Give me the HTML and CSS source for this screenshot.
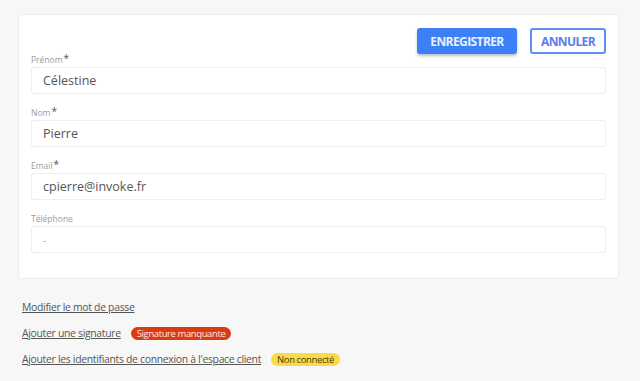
FILE: index.html
```html
<!DOCTYPE html>
<html lang="fr">
<head>
    <meta charset="UTF-8">
    <title>Profil utilisateur</title>
    <link rel="stylesheet" href="styles.css">
</head>
<body>
    <div class="profile-card">
        <div class="card-actions">
            <button class="btn btn-primary" type="button">ENREGISTRER</button>
            <button class="btn btn-outline" type="button">ANNULER</button>
        </div>

        <div class="field">
            <label class="field-label">Prénom<span class="req">*</span></label>
            <div class="field-input">Célestine</div>
        </div>
        <div class="field">
            <label class="field-label">Nom<span class="req">*</span></label>
            <div class="field-input">Pierre</div>
        </div>
        <div class="field">
            <label class="field-label">Email<span class="req">*</span></label>
            <div class="field-input">cpierre@invoke.fr</div>
        </div>
        <div class="field">
            <label class="field-label">Téléphone</label>
            <div class="field-input empty">-</div>
        </div>
    </div>

    <ul class="links">
        <li><a href="#">Modifier le mot de passe</a></li>
        <li><a href="#">Ajouter une signature</a><span class="badge badge-red">Signature manquante</span></li>
        <li><a href="#">Ajouter les identifiants de connexion à l'espace client</a><span class="badge badge-yellow">Non connecté</span></li>
    </ul>
</body>
</html>
```

FILE: styles.css
```css
body{
    margin: 0;
    padding: 14px 21px 0 18px;
    background-color: #f7f7f7;
    font-family: "Open Sans", "Liberation Sans", sans-serif;
    color: #444;
}

.profile-card{
    background-color: #fff;
    border: 1px solid #ececec;
    border-radius: 3px;
    padding: 13px 12px 25px;
}

.card-actions{
    display: flex;
    justify-content: flex-end;
    gap: 13px;
}

.btn{
    height: 26px;
    padding: 0;
    border-radius: 3px;
    font-family: "Open Sans", "Liberation Sans", sans-serif;
    font-size: 12px;
    font-weight: 700;
    letter-spacing: -0.6px;
    cursor: pointer;
}
.btn-primary{
    width: 100px;
    border: 0;
    color: #e9f0ff;
    background-color: #3b80f6;
    box-shadow: 0 2px 3px rgba(0, 0, 0, 0.25);
}
.btn-outline{
    width: 76px;
    border: 2px solid #5d8ff5;
    color: #5a7cee;
    background-color: #fff;
}

.field{ margin-top: 13px; }
.field:nth-child(2){ margin-top: 0; }

.field-label{
    display: block;
    height: 13px;
    font-size: 8.5px;
    line-height: 11px;
    color: #9c9c9c;
}
.field-label .req{
    color: #555;
    font-size: 10px;
    vertical-align: top;
    line-height: 8px;
    margin-left: 1px;
}

.field-input{
    height: 25px;
    line-height: 25px;
    border: 1px solid #efefef;
    border-radius: 2px;
    padding: 0 11px;
    font-size: 12.5px;
    color: #555;
}
.field-input.empty{ color: #aaa; font-size: 11px; }

.links{
    margin: 15px 0 0;
    padding: 0 0 0 4px;
    list-style: none;
    font-size: 10.4px;
}
.links li{
    display: flex;
    align-items: center;
    height: 26px;
}
.links a{
    color: #555;
    text-decoration: underline;
    letter-spacing: -0.3px;
}

.badge{
    margin-left: 10px;
    padding: 0 6px;
    height: 13px;
    line-height: 13px;
    border-radius: 7px;
    font-size: 9.5px;
    letter-spacing: -0.4px;
}
.badge-red{ background-color: #dc3a12; color: #fbe9e4; }
.badge-yellow{ background-color: #fbd947; color: #4a3f10; }
```
